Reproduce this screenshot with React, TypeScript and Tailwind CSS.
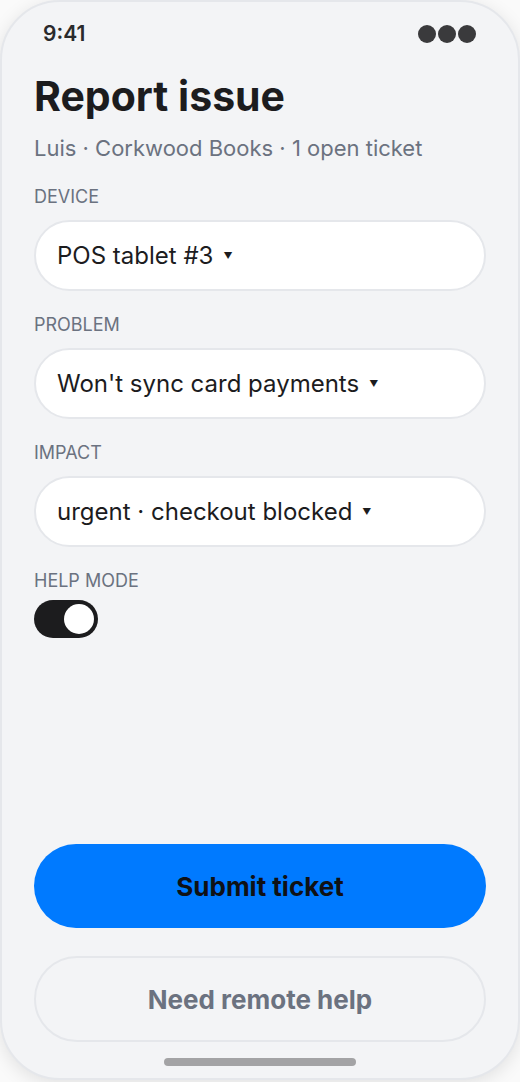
import React from 'react';

const fields = [
  { label: 'Device', value: 'POS tablet #3' },
  { label: 'Problem', value: "Won't sync card payments" },
  { label: 'Impact', value: 'urgent · checkout blocked' },
];

const SelectField: React.FC<{ label: string; value: string }> = ({ label, value }) => (
  <div className="flex flex-col">
    <div className="text-[18px] leading-[22px] uppercase text-[#6b7280]">{label}</div>
    <div className="mt-[12px] h-[71px] rounded-full border-2 border-[#e5e7eb] bg-white flex items-center px-[21px]">
      <span className="text-[24px] text-[#1c1c1e]">{value}</span>
      <span className="ml-[10px] text-[9px] text-[#1c1c1e]">▼</span>
    </div>
  </div>
);

const App: React.FC = () => {
  return (
    <div className="w-[520px] h-[1082px] bg-[#fafafa]" style={{ fontFamily: 'Inter, "Noto Sans", sans-serif' }}>
      <div className="w-[520px] h-[1080px] rounded-[60px] border-2 border-[#e5e7eb] bg-[#f3f4f6] shadow-[0_4px_18px_rgba(0,0,0,0.10)] flex flex-col overflow-hidden">
        {/* status bar */}
        <div className="flex items-center justify-between pl-[41px] pr-[42px] pt-[18px] h-[46px]">
          <span className="text-[21px] font-semibold text-[#2a2a2c]">9:41</span>
          <div className="flex gap-[2px]">
            <span className="w-[18px] h-[18px] rounded-full bg-[#3a3a3c]" />
            <span className="w-[18px] h-[18px] rounded-full bg-[#3a3a3c]" />
            <span className="w-[18px] h-[18px] rounded-full bg-[#3a3a3c]" />
          </div>
        </div>

        <div className="flex-1 flex flex-col px-[32px]">
          <h1 className="mt-[24px] text-[41px] leading-[48px] font-bold text-[#1c1c1e]">Report issue</h1>
          <p className="mt-[14px] text-[22px] leading-[28px] text-[#6b7280]">Luis · Corkwood Books · 1 open ticket</p>

          <div className="mt-[24px] flex flex-col gap-[23px]">
            {fields.map((f) => (
              <SelectField key={f.label} label={f.label} value={f.value} />
            ))}
            <div className="flex flex-col">
              <div className="text-[18px] leading-[22px] uppercase text-[#6b7280]">Help mode</div>
              <div className="mt-[8px] w-[64px] h-[38px] rounded-full bg-[#1c1c1e] flex items-center justify-end pr-[4px]">
                <span className="w-[30px] h-[30px] rounded-full bg-white" />
              </div>
            </div>
          </div>

          <div className="mt-auto flex flex-col gap-[28px]">
            <button className="h-[84px] rounded-full bg-[#007aff] text-[26px] font-bold text-[#0f1115]">
              Submit ticket
            </button>
            <button className="h-[86px] rounded-full border-2 border-[#e5e7eb] text-[26px] font-bold text-[#6b7280]">
              Need remote help
            </button>
          </div>

          <div className="flex justify-center pt-[16px] pb-[12px]">
            <span className="w-[192px] h-[8px] rounded-full bg-[#a3a3a5]" />
          </div>
        </div>
      </div>
    </div>
  );
};

export default App;
